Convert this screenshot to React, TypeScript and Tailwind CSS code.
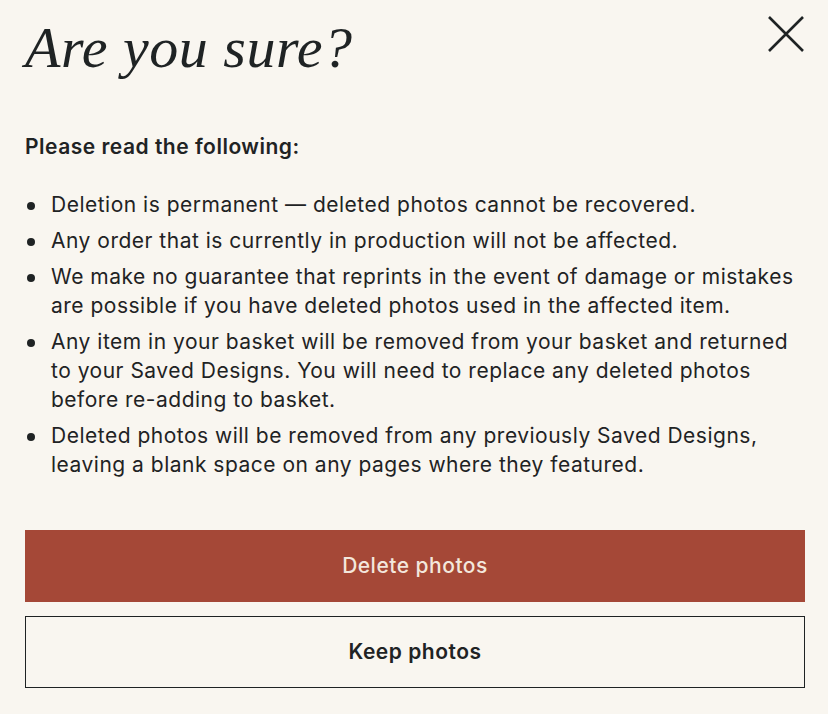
import React from "react";

const points = [
  "Deletion is permanent \u2014 deleted photos cannot be recovered.",
  "Any order that is currently in production will not be affected.",
  "We make no guarantee that reprints in the event of damage or mistakes are possible if you have deleted photos used in the affected item.",
  "Any item in your basket will be removed from your basket and returned to your Saved Designs. You will need to replace any deleted photos before re-adding to basket.",
  "Deleted photos will be removed from any previously Saved Designs, leaving a blank space on any pages where they featured.",
];

const App = () => {
  return (
    <div className="min-h-[714px] w-[828px] bg-[#f9f6f0] pl-[25px] pr-[23px] pt-[10px] pb-[26px] text-[#1f2324] font-['Inter',sans-serif] tracking-[0.5px]">
      <div className="flex items-start justify-between">
        <h1 className="font-['Liberation_Serif',serif] italic text-[58px] leading-[76px] tracking-[0.5px]">
          Are you sure?
        </h1>
        <button aria-label="Close" className="mt-[4px] mr-[-1px] text-[#1f2324]">
          <svg width="40" height="40" viewBox="0 0 40 40" fill="none">
            <path d="M3 3 L37 37 M37 3 L3 37" stroke="currentColor" strokeWidth="2.6" />
          </svg>
        </button>
      </div>

      <p className="mt-[47px] text-[21px] leading-[28px] font-semibold">
        Please read the following:
      </p>

      <ul className="mt-[29px] flex flex-col gap-[7px]">
        {points.map((text) => (
          <li key={text} className="flex text-[21px] leading-[29px]">
            <span className="w-[26px] shrink-0 flex items-start pt-[12px] pl-[2px]">
              <span className="block w-[8px] h-[8px] rounded-full bg-[#1f2324]" />
            </span>
            <span>{text}</span>
          </li>
        ))}
      </ul>

      <div className="mt-[51px] flex flex-col gap-[14px]">
        <button className="h-[72px] w-full bg-[#a54837] text-[#f3e7dc] text-[21px] font-medium">
          Delete photos
        </button>
        <button className="h-[72px] w-full border border-[#1f2324] text-[21px] font-semibold">
          Keep photos
        </button>
      </div>
    </div>
  );
};

export default App;
